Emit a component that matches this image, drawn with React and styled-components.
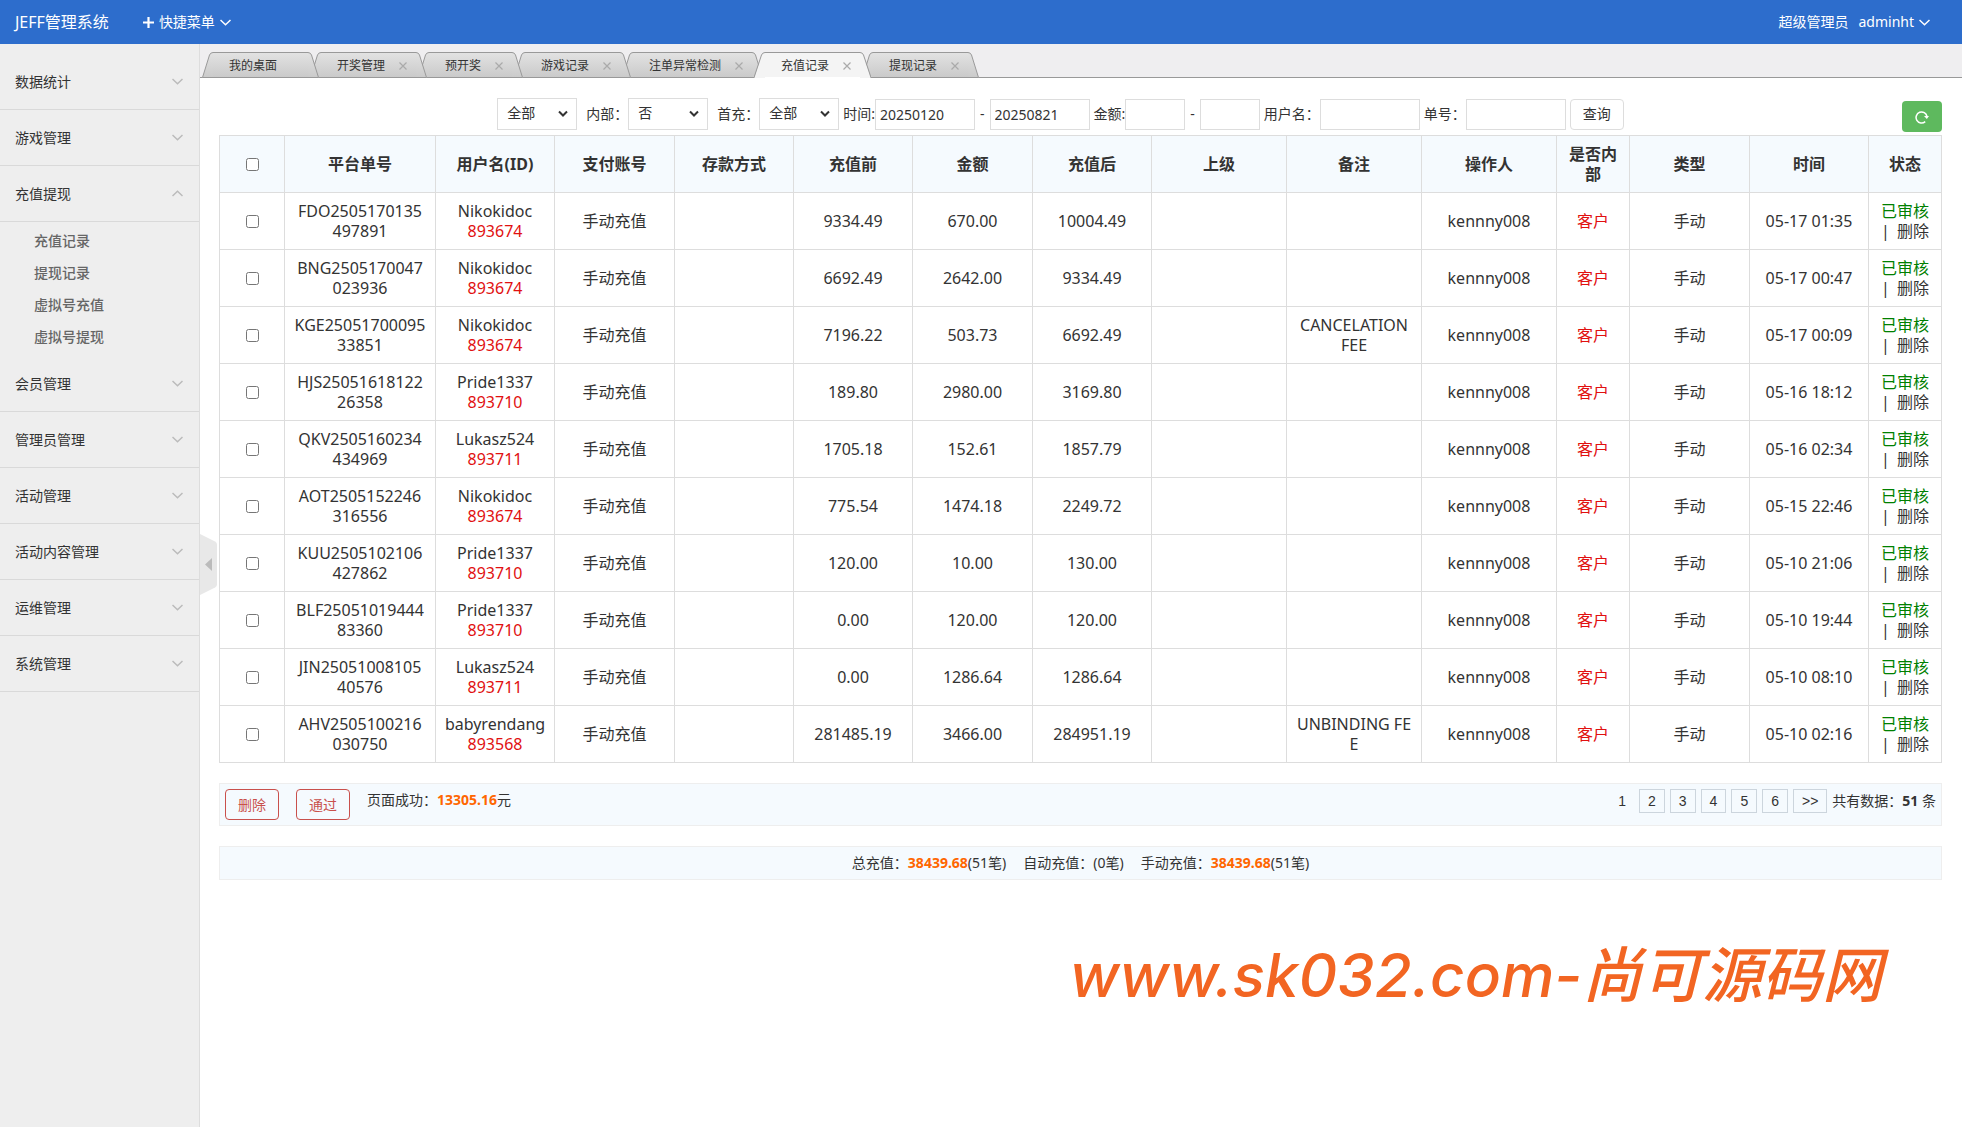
import React, { useState } from 'react';
import styled, { createGlobalStyle, css } from 'styled-components';

const GlobalStyle = createGlobalStyle`
  * {
    box-sizing: border-box;
  }

  body {
    margin: 0;
    background: #fff;
  }

  body, button, input, select {
    font-family: 'Noto Sans', 'Noto Sans CJK SC', sans-serif;
    font-size: 14px;
    line-height: 20px;
    color: #333;
  }

  button {
    padding: 0;
    border: 0;
    background: none;
    cursor: pointer;
  }

  a {
    color: inherit;
    text-decoration: none;
  }
`;

const menus = [
  { title: '数据统计' },
  { title: '游戏管理' },
  {
    title: '充值提现',
    children: ['充值记录', '提现记录', '虚拟号充值', '虚拟号提现'],
  },
  { title: '会员管理' },
  { title: '管理员管理' },
  { title: '活动管理' },
  { title: '活动内容管理' },
  { title: '运维管理' },
  { title: '系统管理' },
];

const tabs = [
  '我的桌面',
  '开奖管理',
  '预开奖',
  '游戏记录',
  '注单异常检测',
  '充值记录',
  '提现记录',
];

const columns = [
  { title: '平台单号', width: 151 },
  { title: '用户名(ID)', width: 119 },
  { title: '支付账号', width: 120 },
  { title: '存款方式', width: 119 },
  { title: '充值前', width: 119 },
  { title: '金额', width: 120 },
  { title: '充值后', width: 119 },
  { title: '上级', width: 135 },
  { title: '备注', width: 135 },
  { title: '操作人', width: 135 },
  { title: '是否内部', width: 73 },
  { title: '类型', width: 120 },
  { title: '时间', width: 119 },
  { title: '状态', width: 73 },
];

// order no, user, user id, before, amount, after, time, remark
const records = [
  ['FDO2505170135\n497891', 'Nikokidoc', '893674', '9334.49', '670.00', '10004.49', '05-17 01:35'],
  ['BNG2505170047\n023936', 'Nikokidoc', '893674', '6692.49', '2642.00', '9334.49', '05-17 00:47'],
  ['KGE25051700095\n33851', 'Nikokidoc', '893674', '7196.22', '503.73', '6692.49', '05-17 00:09', 'CANCELATION\nFEE'],
  ['HJS25051618122\n26358', 'Pride1337', '893710', '189.80', '2980.00', '3169.80', '05-16 18:12'],
  ['QKV2505160234\n434969', 'Lukasz524', '893711', '1705.18', '152.61', '1857.79', '05-16 02:34'],
  ['AOT2505152246\n316556', 'Nikokidoc', '893674', '775.54', '1474.18', '2249.72', '05-15 22:46'],
  ['KUU2505102106\n427862', 'Pride1337', '893710', '120.00', '10.00', '130.00', '05-10 21:06'],
  ['BLF25051019444\n83360', 'Pride1337', '893710', '0.00', '120.00', '120.00', '05-10 19:44'],
  ['JIN25051008105\n40576', 'Lukasz524', '893711', '0.00', '1286.64', '1286.64', '05-10 08:10'],
  ['AHV2505100216\n030750', 'babyrendang', '893568', '281485.19', '3466.00', '284951.19', '05-10 02:16', 'UNBINDING FE\nE'],
];

/* Header */

const TopBar = styled.header`
  display: flex;
  align-items: center;
  height: 44px;
  padding: 0 32px 0 15px;
  background: #2d6dcc;
  color: #fff;
`;

const Logo = styled.a`
  font-size: 16px;
`;

const QuickMenu = styled.button`
  display: flex;
  align-items: center;
  gap: 5px;
  margin-left: 34px;
  color: #fff;
`;

const Account = styled.div`
  display: flex;
  align-items: center;
  gap: 10px;
  margin-left: auto;
`;

const AccountMenu = styled(QuickMenu)`
  margin-left: 0;
`;

const Chevron = styled(({ up, className }) => (
  <svg className={className} width="11" height="7" viewBox="0 0 11 7">
    <path d={up ? 'M0.500 6 5.500 1.200 10.500 6' : 'M0.500 1 5.500 5.800 10.500 1'} />
  </svg>
))`
  fill: none;
  stroke: ${props => props.color || 'currentColor'};
  stroke-width: 1.5px;
`;

/* Sidebar */

const Layout = styled.div`
  position: relative;
  display: flex;
  flex-direction: column;
  min-height: 100vh;
`;

const Body = styled.div`
  display: flex;
  flex: 1;
`;

const Sidebar = styled.nav`
  flex: 0 0 200px;
  padding-top: 10px;
  background: #eee;
  border-right: 1px solid #ddd;
`;

const MenuTitle = styled.button`
  display: flex;
  align-items: center;
  justify-content: space-between;
  width: 100%;
  height: 56px;
  padding: 0 16px 0 15px;
  border-bottom: 1px solid #d9d9d9;
`;

const SubMenu = styled.div`
  padding: 3px 0;
`;

const SubLink = styled.a`
  display: block;
  padding: 0 34px;
  line-height: 32px;
  font-weight: 500;
  color: #666;
`;

const Collapse = styled.button`
  position: absolute;
  top: 50%;
  left: 200px;
  width: 17px;
  height: 61px;
  margin-top: -30px;

  svg {
    display: block;
  }
`;

/* Tabs */

const Main = styled.main`
  flex: 1;
  min-width: 0;
`;

const TabBar = styled.ul`
  display: flex;
  align-items: flex-end;
  height: 34px;
  margin: 0;
  padding: 0 0 0 2px;
  list-style: none;
  background: #efeef0;
  box-shadow: inset 0 -1px #999;
`;

const tabFill = css`
  background: ${props =>
    props.$active ? '#f4f4f4' : 'linear-gradient(#e2e2e2, #cacaca)'};
`;

const TabItem = styled.li`
  position: relative;
  z-index: ${props => props.$order};
  display: flex;
  height: 26px;
  margin-right: -9px;
`;

const TabFace = styled.div`
  ${tabFill}
  display: flex;
  align-items: center;
  justify-content: space-between;
  gap: 14px;
  padding: 2px 9px 0 16px;
  border-top: 1px solid #999;
  border-bottom: 1px solid ${props => (props.$active ? '#fff' : '#999')};
`;

const TabLabel = styled.button`
  font-size: 12px;
`;

const TabClose = styled.button`
  width: 8px;
  height: 10px;
  visibility: ${props => (props.$fixed ? 'hidden' : 'visible')};

  svg {
    display: block;
    stroke: #aaa;
    stroke-width: 1.2px;
  }
`;

const TabEdge = ({ active, right }) => {
  const id = `edge-${active ? 'on' : 'off'}-${right ? 'r' : 'l'}`;
  return (
    <svg width="11" height="26" viewBox="0 0 11 26">
      <defs>
        <linearGradient id={id} x1="0" x2="0" y1="0" y2="1">
          <stop offset="0" stopColor={active ? '#f4f4f4' : '#e2e2e2'} />
          <stop offset="1" stopColor={active ? '#f4f4f4' : '#cacaca'} />
        </linearGradient>
      </defs>
      <g transform={right ? 'matrix(-1 0 0 1 11 0)' : undefined}>
        <path
          d="M0 26 0.500 25.500 7.500 3Q8.500 0.500 11 0.500V26Z"
          fill={`url(#${id})`}
        />
        <path
          d={
            active
              ? 'M0 25.500 7.500 3Q8.500 0.500 11 0.500'
              : 'M11 25.500H0.500L7.500 3Q8.500 0.500 11 0.500'
          }
          fill="none"
          stroke="#999"
        />
      </g>
    </svg>
  );
};

const Tab = ({ title, index, active, onSelect }) => (
  <TabItem $order={active ? 20 : 10 - index}>
    <TabEdge active={active} />
    <TabFace $active={active}>
      <TabLabel onClick={onSelect}>{title}</TabLabel>
      <TabClose $fixed={index === 0} aria-label="关闭">
        <svg width="8" height="10" viewBox="0 0 8 10">
          <path d="M0.500 1.500 7.500 8.500M7.500 1.500 0.500 8.500" />
        </svg>
      </TabClose>
    </TabFace>
    <TabEdge active={active} right />
  </TabItem>
);

/* Search form */

const Content = styled.section`
  padding: 20px 20px 0 19px;
`;

const Toolbar = styled.div`
  display: flex;
  align-items: flex-start;
  min-height: 37px;
`;

const SearchForm = styled.form`
  display: flex;
  flex: 1;
  flex-wrap: wrap;
  align-items: center;
  justify-content: center;
  gap: 4px;
`;

const Field = styled.label`
  display: flex;
  align-items: center;
  white-space: nowrap;
  margin-left: ${props => (props.$spaced ? 5 : 0)}px;
`;

const SelectBox = styled.span`
  display: inline-grid;
  align-items: center;

  select,
  svg {
    grid-area: 1 / 1;
  }

  select {
    appearance: none;
    width: 80px;
    height: 32px;
    padding: 4px 24px 6px 9px;
    border: 1px solid #ddd;
    border-radius: 0;
    background: #fff;
  }

  svg {
    justify-self: end;
    margin-right: 9px;
    fill: none;
    stroke: #333;
    stroke-width: 2px;
    pointer-events: none;
  }
`;

const Select = ({ label, value }) => (
  <SelectBox>
    <select aria-label={label}>
      <option>{value}</option>
    </select>
    <svg width="10" height="8" viewBox="0 0 10 8">
      <path d="M1 1.500 5 5.500 9 1.500" />
    </svg>
  </SelectBox>
);

const TextInput = styled.input`
  width: ${props => (props.$small ? 60 : 100)}px;
  height: 31px;
  padding: 4px;
  border: 1px solid #ddd;
`;

const Dash = styled.span`
  padding: 0 1px;
`;

const Button = styled.button`
  width: 54px;
  height: 31px;
  border: 1px solid #ddd;
  border-radius: 4px;
  background: #fff;
`;

const DangerButton = styled(Button)`
  border-color: #c9504c;
  background: transparent;
  color: #c9504c;
`;

const RefreshButton = styled.button`
  display: flex;
  align-items: center;
  justify-content: center;
  width: 40px;
  height: 31px;
  margin-top: 3px;
  border-radius: 4px;
  background: #5eb95e;
`;

/* Table */

const Table = styled.table`
  width: 100%;
  table-layout: fixed;
  border-collapse: collapse;
  font-size: 16px;
  text-align: center;

  th,
  td {
    height: 57px;
    padding: 8px;
    border: 1px solid #ddd;
    line-height: 20px;
    white-space: pre-line;
  }

  th {
    background: #f5fafe;
  }
`;

const Checkbox = styled.input`
  display: block;
  width: 13px;
  height: 13px;
  margin: 0 auto;
`;

const Red = styled.span`
  color: #e11010;
`;

const Green = styled.span`
  color: green;
`;

const DeleteLink = styled.a`
  margin-left: 3px;
`;

const RecordRow = ({ record }) => {
  const [orderNo, user, userId, before, amount, after, time, remark] = record;
  return (
    <tr>
      <td>
        <Checkbox type="checkbox" aria-label={userId} />
      </td>
      <td>{orderNo}</td>
      <td>
        {user}
        <br />
        <Red>{userId}</Red>
      </td>
      <td>手动充值</td>
      <td />
      <td>{before}</td>
      <td>{amount}</td>
      <td>{after}</td>
      <td />
      <td>{remark}</td>
      <td>kennny008</td>
      <td>
        <Red>客户</Red>
      </td>
      <td>手动</td>
      <td>{time}</td>
      <td>
        <Green>已审核</Green>
        <br />| <DeleteLink href="#delete">删除</DeleteLink>
      </td>
    </tr>
  );
};

/* Footer bars */

const Bar = styled.div`
  display: flex;
  margin-top: 20px;
  border: 1px solid #eee;
  background: #f5fafe;
`;

const ActionBar = styled(Bar)`
  align-items: flex-start;
  gap: 17px;
  padding: 5px;
  min-height: 43px;
`;

const SummaryBar = styled(Bar)`
  justify-content: center;
  gap: 17px;
  padding: 6px 0;
`;

const Amount = styled.b`
  color: #f60;
`;

const PageTotal = styled.span`
  padding-top: 1px;
`;

const Pager = styled.div`
  display: flex;
  align-items: center;
  gap: 5px;
  margin-left: auto;
`;

const pageCell = css`
  padding: 0 8px;
  line-height: 22px;
  font-family: 'Liberation Sans', sans-serif;
`;

const CurrentPage = styled.span`
  ${pageCell}
`;

const PageLink = styled.a`
  ${pageCell}
  border: 1px solid #ccd5dd;
`;

const SiteMark = styled.p`
  margin: 50px 60px 0 0;
  font-family: Inter, 'Noto Sans CJK SC', sans-serif;
  font-size: 60px;
  font-style: italic;
  font-weight: 500;
  line-height: 90px;
  text-align: right;
  color: #f26522;
`;

const App = () => {
  const [activeTab, setActiveTab] = useState(5);
  const [openMenu, setOpenMenu] = useState(2);

  return (
    <Layout>
      <GlobalStyle />
      <TopBar>
        <Logo href="#home">JEFF管理系统</Logo>
        <QuickMenu>
          <svg width="11" height="11" viewBox="0 0 11 11">
            <path d="M5.500 0V11M0 5.500H11" stroke="#fff" strokeWidth="2.200" />
          </svg>
          快捷菜单
          <Chevron />
        </QuickMenu>
        <Account>
          <span>超级管理员</span>
          <AccountMenu>
            adminht
            <Chevron />
          </AccountMenu>
        </Account>
      </TopBar>
      <Body>
        <Sidebar>
          {menus.map((menu, i) => (
            <React.Fragment key={menu.title}>
              <MenuTitle onClick={() => setOpenMenu(i)}>
                {menu.title}
                <Chevron up={i === openMenu} color="#bbb" />
              </MenuTitle>
              {i === openMenu && menu.children && (
                <SubMenu>
                  {menu.children.map(name => (
                    <SubLink key={name} href="#page">
                      {name}
                    </SubLink>
                  ))}
                </SubMenu>
              )}
            </React.Fragment>
          ))}
        </Sidebar>
        <Main>
          <TabBar>
            {tabs.map((title, i) => (
              <Tab
                key={title}
                title={title}
                index={i}
                active={i === activeTab}
                onSelect={() => setActiveTab(i)}
              />
            ))}
          </TabBar>
          <Content>
            <Toolbar>
              <SearchForm onSubmit={e => e.preventDefault()}>
                <Select label="状态" value="全部" />
                <Field $spaced>
                  内部：
                  <Select value="否" />
                </Field>
                <Field $spaced>
                  首充：
                  <Select value="全部" />
                </Field>
                <Field>
                  时间:
                  <TextInput defaultValue="20250120" />
                </Field>
                <Dash>-</Dash>
                <TextInput defaultValue="20250821" aria-label="结束时间" />
                <Field>
                  金额:
                  <TextInput $small />
                </Field>
                <Dash>-</Dash>
                <TextInput $small aria-label="最大金额" />
                <Field>
                  用户名：
                  <TextInput />
                </Field>
                <Field>
                  单号：
                  <TextInput />
                </Field>
                <Button type="submit">查询</Button>
              </SearchForm>
              <RefreshButton aria-label="刷新">
                <svg width="14" height="14" viewBox="0 0 14 14">
                  <path
                    d="M10.200 11.600A5.500 5.500 0 1 1 12 6.500"
                    fill="none"
                    stroke="#fff"
                    strokeWidth="1.500"
                  />
                  <path d="M9 6H14L11.800 9Z" fill="#fff" />
                </svg>
              </RefreshButton>
            </Toolbar>
            <Table>
              <colgroup>
                <col width="65" />
                {columns.map(({ title, width }) => (
                  <col key={title} width={width} />
                ))}
              </colgroup>
              <thead>
                <tr>
                  <th>
                    <Checkbox type="checkbox" aria-label="全选" />
                  </th>
                  {columns.map(({ title }) => (
                    <th key={title}>{title}</th>
                  ))}
                </tr>
              </thead>
              <tbody>
                {records.map(record => (
                  <RecordRow key={record[0]} record={record} />
                ))}
              </tbody>
            </Table>
            <ActionBar>
              <DangerButton>删除</DangerButton>
              <DangerButton>通过</DangerButton>
              <PageTotal>
                页面成功：<Amount>13305.16</Amount>元
              </PageTotal>
              <Pager>
                <CurrentPage>1</CurrentPage>
                {['2', '3', '4', '5', '6', '>>'].map(page => (
                  <PageLink key={page} href="#page">
                    {page}
                  </PageLink>
                ))}
                <span>
                  共有数据：<b>51</b> 条
                </span>
              </Pager>
            </ActionBar>
            <SummaryBar>
              <span>
                总充值：<Amount>38439.68</Amount>(51笔)
              </span>
              <span>自动充值：(0笔)</span>
              <span>
                手动充值：<Amount>38439.68</Amount>(51笔)
              </span>
            </SummaryBar>
            <SiteMark>www.sk032.com-尚可源码网</SiteMark>
          </Content>
        </Main>
      </Body>
      <Collapse aria-label="收起菜单">
        <svg width="17" height="61" viewBox="0 0 17 61">
          <path d="M0 0 15 7.500Q17 8.500 17 10.500V50.500Q17 52.500 15 53.500L0 61Z" fill="#e8e8e8" />
          <path d="M5 30.500 12 24V37Z" fill="#bbb" />
        </svg>
      </Collapse>
    </Layout>
  );
};

export default App;
